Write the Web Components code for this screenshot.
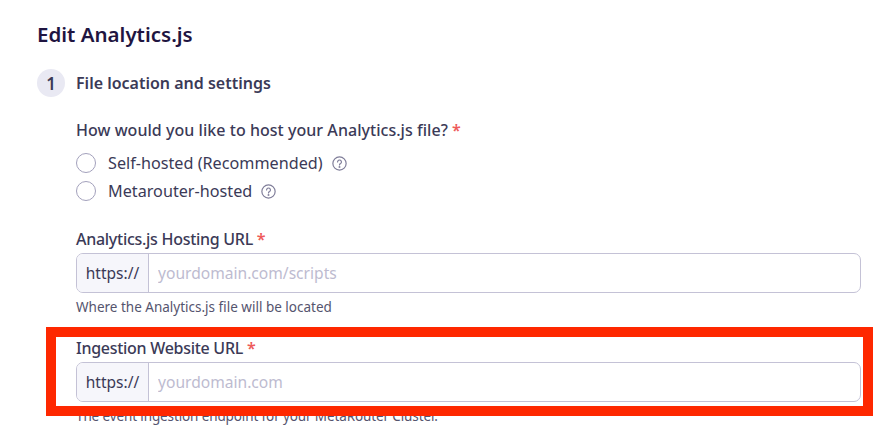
<!DOCTYPE html>
<html>
<head>
<meta charset="utf-8">
<style>
    html, body { margin: 0; background: #fff; height: 431px; overflow: hidden; }
    body { font-family: "Noto Sans", sans-serif; color: #3b3a57; }
</style>
</head>
<body>
<edit-page>
    <form-step num="1" title="File location and settings">
        <radio-group label="How would you like to host your Analytics.js file?">
            <radio-option>Self-hosted (Recommended)</radio-option>
            <radio-option>Metarouter-hosted</radio-option>
        </radio-group>
        <url-field label="Analytics.js Hosting URL" placeholder="yourdomain.com/scripts" hint="Where the Analytics.js file will be located"></url-field>
        <url-field class="second" label="Ingestion Website URL" placeholder="yourdomain.com" hint="The event ingestion endpoint for your MetaRouter Cluster."></url-field>
    </form-step>
    <red-highlight></red-highlight>
</edit-page>

<script>
customElements.define('edit-page', class extends HTMLElement {
    constructor() {
        super();
        this.attachShadow({mode: 'open'}).innerHTML = `
        <style>
            :host { display: block; position: relative; height: 431px; padding: 22px 18px 0 37px; box-sizing: border-box; overflow: hidden; }
            h1 { margin: 0 0 23px; font-size: 20.5px; line-height: 24px; font-weight: 600; color: #1f1541; letter-spacing: 0; }
        </style>
        <h1>Edit Analytics.js</h1>
        <slot></slot>
        `;
    }
});

customElements.define('form-step', class extends HTMLElement {
    constructor() {
        super();
        this.attachShadow({mode: 'open'}).innerHTML = `
        <style>
            :host { display: block; }
            .head { display: flex; align-items: center; gap: 11px; height: 28px; }
            .num { width: 28px; height: 28px; border-radius: 50%; background: #e9e9f3; display: flex; align-items: center; justify-content: center; font-size: 17px; font-weight: 600; color: #3b3a57; }
            .title { font-size: 16px; font-weight: 600; color: #3b3a57; letter-spacing: 0; }
            .body { padding: 23px 0 0 39px; }
        </style>
        <div class="head"><div class="num"></div><div class="title"></div></div>
        <div class="body"><slot></slot></div>
        `;
        this.shadowRoot.querySelector('.num').textContent = this.getAttribute('num');
        this.shadowRoot.querySelector('.title').textContent = this.getAttribute('title');
    }
});

customElements.define('req-label', class extends HTMLElement {
    constructor() {
        super();
        this.attachShadow({mode: 'open'}).innerHTML = `
        <style>
            :host { display: block; font-size: 16px; line-height: 20px; font-weight: 500; color: #3b3a57; letter-spacing: var(--label-spacing, 0.04px); }
            b { color: #ee5a5a; font-weight: 600; }
        </style>
        <slot></slot> <b>*</b>
        `;
    }
});

customElements.define('radio-group', class extends HTMLElement {
    constructor() {
        super();
        this.attachShadow({mode: 'open'}).innerHTML = `
        <style>
            :host { display: block; margin-bottom: 28px; }
            .opts { margin-top: 13px; display: flex; flex-direction: column; gap: 8px; }
        </style>
        <req-label></req-label>
        <div class="opts"><slot></slot></div>
        `;
        this.shadowRoot.querySelector('req-label').textContent = this.getAttribute('label');
    }
});

customElements.define('radio-option', class extends HTMLElement {
    constructor() {
        super();
        this.attachShadow({mode: 'open'}).innerHTML = `
        <style>
            :host { display: flex; align-items: center; height: 20px; font-size: 16.2px; color: #3b3a57; }
            .circle { width: 20px; height: 20px; box-sizing: border-box; border: 1.5px solid #a3a1bc; border-radius: 50%; background: #fff; margin-right: 12px; flex: none; }
            svg { margin-left: 9px; flex: none; }
        </style>
        <span class="circle"></span>
        <slot></slot>
        <svg width="15" height="15" viewBox="0 0 14 14" fill="none" stroke="#7f7d99" stroke-width="1.1" stroke-linecap="round">
            <circle cx="7" cy="7" r="6.2"/>
            <path d="M5.2 5.5a1.8 1.8 0 1 1 2.7 1.6c-.6.3-.9.6-.9 1.2"/>
            <circle cx="7" cy="10.2" r=".35" fill="#7f7d99"/>
        </svg>
        `;
    }
});

customElements.define('url-field', class extends HTMLElement {
    constructor() {
        super();
        this.attachShadow({mode: 'open'}).innerHTML = `
        <style>
            :host { display: block; --label-spacing: -0.28px; }
            :host(.second) { margin-top: 22px; }
            :host(.second) .hint { letter-spacing: -0.12px; }
            .box { margin-top: 4px; display: flex; height: 40px; box-sizing: border-box; border: 1px solid #c4c2d6; border-radius: 7px; overflow: hidden; background: #fff; }
            .pre { width: 72px; flex: none; box-sizing: border-box; background: #f6f6fb; border-right: 1px solid #c4c2d6; display: flex; align-items: center; justify-content: center; font-size: 15.5px; color: #3b3a57; }
            input { flex: 1; min-width: 0; border: 0; outline: 0; padding: 0 9px; font: 15.6px "Noto Sans", sans-serif; background: transparent; color: #3b3a57; }
            input::placeholder { color: #bdbbd0; opacity: 1; }
            .hint { margin-top: 5px; font-size: 13.5px; line-height: 18px; color: #55546e; }
        </style>
        <req-label></req-label>
        <div class="box"><div class="pre">https://</div><input type="text"></div>
        <div class="hint"></div>
        `;
        this.shadowRoot.querySelector('req-label').textContent = this.getAttribute('label');
        this.shadowRoot.querySelector('input').placeholder = this.getAttribute('placeholder');
        this.shadowRoot.querySelector('.hint').textContent = this.getAttribute('hint');
    }
});

// the red annotation box lies over the form
customElements.define('red-highlight', class extends HTMLElement {
    constructor() {
        super();
        this.attachShadow({mode: 'open'}).innerHTML = `
        <style>
            :host { position: absolute; left: 46px; top: 327px; width: 827px; height: 89px; box-sizing: border-box; border: 10px solid #fe2800; pointer-events: none; }
        </style>
        `;
    }
});
</script>
</body>
</html>
